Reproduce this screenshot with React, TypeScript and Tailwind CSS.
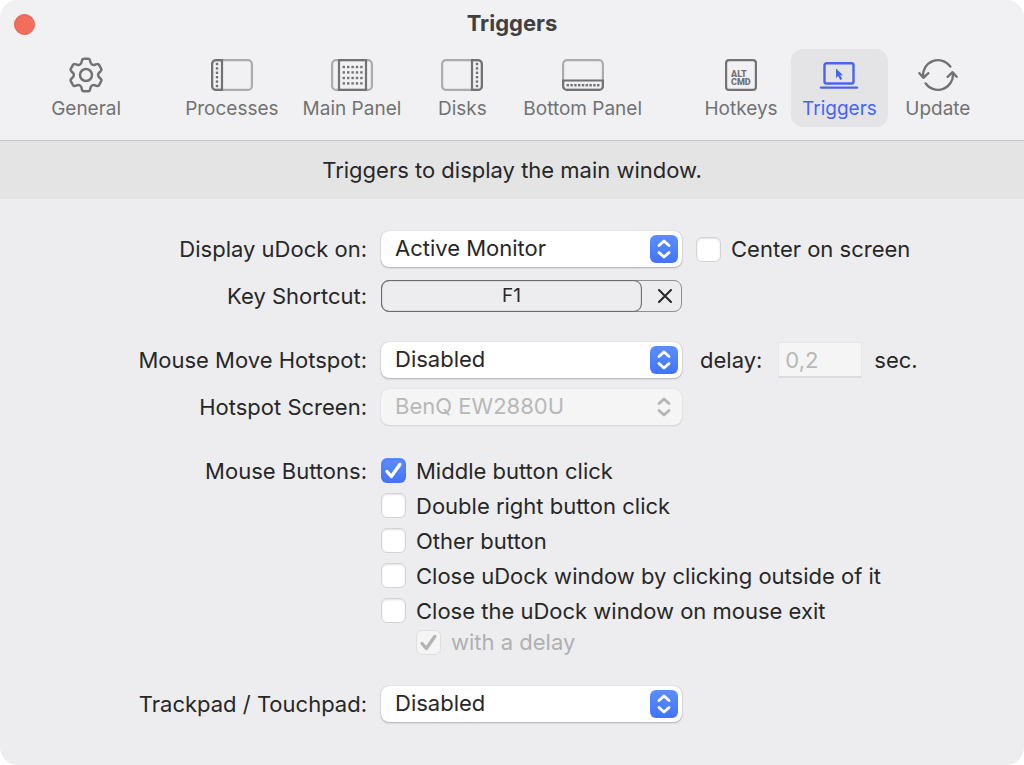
import { useState } from 'react';
import type { ReactNode } from 'react';

const ROW = 'flex h-9 items-center';

// Six-toothed gear outline around (18, 18)
function gearPath() {
    const at = (tooth: number, x: number, r: number) => {
        const a = (tooth * Math.PI) / 3;
        const px = 18 + x * Math.cos(a) + r * Math.sin(a);
        const py = 18 + x * Math.sin(a) - r * Math.cos(a);
        return `${px.toFixed(2)} ${py.toFixed(2)}`;
    };
    let d = `M${at(0, -4.5, 12.8)}`;
    for (let i = 0; i < 6; i++) {
        d += `L${at(i, -4, 14.8)}Q${at(i, -3.7, 16.3)} ${at(i, -2.2, 16.3)}L${at(i, 2.2, 16.3)}`;
        d += `Q${at(i, 3.7, 16.3)} ${at(i, 4, 14.8)}L${at(i, 4.5, 12.8)}`;
        d += `C${at(i, 5, 10.6)} ${at(i + 1, -5, 10.6)} ${at(i + 1, -4.5, 12.8)}`;
    }
    return d + 'Z';
}

function GearIcon() {
    return (
        <svg width="36" height="36" viewBox="0 0 36 36" fill="none" stroke="currentColor" strokeWidth="2.5" strokeLinejoin="round">
            <path d={gearPath()} />
            <circle cx="18" cy="18" r="6" />
        </svg>
    );
}

function ScreenIcon({ children }: { children: ReactNode }) {
    return (
        <svg width="42" height="32" viewBox="0 0 42 32" fill="none" stroke="currentColor" strokeWidth="2.2">
            <rect x="1.1" y="1.1" width="39.8" height="29.8" rx="4" stroke="#acacad" />
            {children}
        </svg>
    );
}

function Dots({ xs, ys }: { xs: number[]; ys: number[] }) {
    return (
        <>
            {ys.map((y) => xs.map((x) => <rect key={`${x}-${y}`} x={x - 1.2} y={y - 1.2} width="2.4" height="2.4" fill="currentColor" stroke="none" />))}
        </>
    );
}

function ProcessesIcon() {
    return (
        <ScreenIcon>
            <path d="M11 1.100H5a4 4 0 0 0-3.900 4v21.800a4 4 0 0 0 3.900 4h6z" />
            <Dots xs={[6]} ys={[5, 9.4, 13.8, 18.2, 22.6, 27]} />
        </ScreenIcon>
    );
}

function MainPanelIcon() {
    return (
        <ScreenIcon>
            <rect x="8" y="1.1" width="27" height="29.8" />
            <Dots xs={[12.8, 17.2, 21.6, 26, 30.4]} ys={[8, 13.4, 19, 24.4]} />
        </ScreenIcon>
    );
}

function DisksIcon() {
    return (
        <ScreenIcon>
            <path d="M31 1.100h6a4 4 0 0 1 3.900 4v21.800a4 4 0 0 1-3.900 4h-6z" />
            <Dots xs={[36]} ys={[5, 9.4, 13.8, 18.2, 22.6, 27]} />
        </ScreenIcon>
    );
}

function BottomPanelIcon() {
    return (
        <ScreenIcon>
            <path d="M1.100 21.500h39.800v5.400a4 4 0 0 1-4 4H5.100a4 4 0 0 1-4-4z" />
            <Dots xs={[5.8, 9.6, 13.4, 17.2, 21, 24.8, 28.6, 32.4, 36.2]} ys={[26.2]} />
        </ScreenIcon>
    );
}

function HotkeysIcon() {
    return (
        <svg width="32" height="32" viewBox="0 0 32 32" fill="none" stroke="currentColor" strokeWidth="2.2">
            <rect x="1.1" y="1.1" width="29.8" height="29.8" rx="3" />
            <g className="font-['Roboto',sans-serif] text-[9px] font-black" fill="currentColor" stroke="none">
                <text x="6" y="17.6">ALT</text>
                <text x="6" y="26.2">CMD</text>
            </g>
        </svg>
    );
}

function TriggersIcon() {
    return (
        <svg width="40" height="28" viewBox="0 0 40 28" fill="none" stroke="currentColor" strokeWidth="2.4">
            <rect x="5.5" y="2.2" width="29" height="20.3" rx="2" />
            <path d="M2 26.600h36" strokeLinecap="round" />
            <path d="M17 7.500v9.500l2.200-2 2 4 2-1-2-3.800h2.800z" fill="currentColor" stroke="none" />
        </svg>
    );
}

function UpdateIcon() {
    return (
        <svg width="42" height="34" viewBox="0 0 42 34" fill="none" stroke="currentColor" strokeWidth="2.4" strokeLinecap="round" strokeLinejoin="round">
            <path d="M33.4 8.6A15 15 0 0 0 6.200 19.200M2.400 15.200l4 4.600 5-4.600" />
            <path d="M8.600 25.400A15 15 0 0 0 35.800 14.800M30.600 18.800l5-4.600 4 4.600" />
        </svg>
    );
}

function ToolbarItem({ label, icon, active, onClick }: { label: string; icon: ReactNode; active: boolean; onClick: () => void }) {
    return (
        <button
            type="button"
            onClick={onClick}
            className={`flex h-[78px] min-w-24 flex-col items-center rounded-xl px-[11px] pt-2 ${active ? 'bg-[#e4e4e6] text-[#4764f5]' : 'text-[#727273]'}`}
        >
            <span className="flex h-9 items-center">{icon}</span>
            <span className="mt-1 text-[19px] leading-6 whitespace-nowrap">{label}</span>
        </button>
    );
}

function Chevrons() {
    return (
        <svg width="14" height="20" viewBox="0 0 14 20" fill="none" stroke="currentColor" strokeWidth="2.8" strokeLinecap="round" strokeLinejoin="round">
            <path d="M2 6.500 7 2l5 4.500M2 13.500l5 4.500 5-4.500" />
        </svg>
    );
}

function PopupSelect({ id, options, disabled = false }: { id: string; options: string[]; disabled?: boolean }) {
    return (
        <div className="relative w-[301px] shrink-0">
            <select
                id={id}
                disabled={disabled}
                className="block h-9 w-full appearance-none rounded-lg bg-white pr-10 pb-0.5 pl-3.5 text-[#272727] shadow-[0_0_1px_rgba(0,0,0,0.25),0_1px_2px_rgba(0,0,0,0.25)] disabled:bg-[#f5f5f5] disabled:text-[#b8b8b9] disabled:opacity-100 disabled:shadow-[0_0_1px_rgba(0,0,0,0.15),0_1px_2px_rgba(0,0,0,0.1)]"
            >
                {options.map((o) => (
                    <option key={o}>{o}</option>
                ))}
            </select>
            <span
                className={`pointer-events-none absolute top-1 right-1 flex size-7 items-center justify-center rounded-md ${disabled ? 'text-[#b4b4b5]' : 'bg-linear-to-b from-[#5a90fb] to-[#4372fb] text-white'}`}
            >
                <Chevrons />
            </span>
        </div>
    );
}

function Checkbox({ label, defaultChecked, disabled }: { label: string; defaultChecked?: boolean; disabled?: boolean }) {
    return (
        <label className={`flex items-center gap-2.5 whitespace-nowrap ${disabled ? 'text-[#b0b0b1]' : ''}`}>
            <span className="relative size-[25px] shrink-0">
                <input
                    type="checkbox"
                    defaultChecked={defaultChecked}
                    disabled={disabled}
                    className="peer block size-full appearance-none rounded-md border border-[#d3d3d4] bg-white shadow-[inset_0_1px_2px_rgba(0,0,0,0.12)] enabled:checked:border-transparent enabled:checked:bg-linear-to-b enabled:checked:from-[#5a90fb] enabled:checked:to-[#4372fb] enabled:checked:bg-origin-border disabled:border-[#dededf] disabled:bg-[#f5f5f5] disabled:shadow-none"
                />
                <svg
                    viewBox="0 0 25 25"
                    fill="none"
                    stroke="currentColor"
                    strokeWidth="3.4"
                    strokeLinecap="round"
                    strokeLinejoin="round"
                    className="pointer-events-none absolute inset-0 hidden text-white peer-checked:block peer-disabled:text-[#b4b4b5]"
                >
                    <path d="M6 13.500l4.300 5L18.800 6.500" />
                </svg>
            </span>
            <span>{label}</span>
        </label>
    );
}

function FieldRow({ label, htmlFor, children }: { label: string; htmlFor?: string; children: ReactNode }) {
    return (
        <div className="grid grid-cols-[259px_1fr] gap-x-3.5">
            <div className={`${ROW} justify-end whitespace-nowrap`}>
                {htmlFor ? <label htmlFor={htmlFor}>{label}</label> : <span>{label}</span>}
            </div>
            {children}
        </div>
    );
}

const toolbarGroups = [
    [{ label: 'General', icon: <GearIcon /> }],
    [
        { label: 'Processes', icon: <ProcessesIcon /> },
        { label: 'Main Panel', icon: <MainPanelIcon /> },
        { label: 'Disks', icon: <DisksIcon /> },
        { label: 'Bottom Panel', icon: <BottomPanelIcon /> },
    ],
    [
        { label: 'Hotkeys', icon: <HotkeysIcon /> },
        { label: 'Triggers', icon: <TriggersIcon /> },
        { label: 'Update', icon: <UpdateIcon /> },
    ],
];

const mouseOptions = ['Middle button click', 'Double right button click', 'Other button', 'Close uDock window by clicking outside of it', 'Close the uDock window on mouse exit'];

export default function App() {
    const [tab, setTab] = useState('Triggers');

    return (
        <div className="min-h-screen bg-white font-['Inter',sans-serif]">
            <div className="flex min-h-screen flex-col overflow-hidden rounded-[18px] bg-[#ededef] text-[22px] leading-7 text-[#272727]">
                <header className="border-b border-[#c6c6c8] bg-[#f1f1f3] pb-[13px]">
                    <div className="grid h-[49px] grid-cols-[1fr_auto_1fr] items-center px-3.5">
                        <button type="button" aria-label="Close" className="size-[21px] rounded-full border border-[#e2614f] bg-[#f16d5c]" />
                        <h1 className="pb-1 font-bold text-[#404041]">Triggers</h1>
                    </div>
                    <nav className="flex justify-center gap-10">
                        {toolbarGroups.map((group) => (
                            <div key={group[0].label} className="flex gap-0.5">
                                {group.map((item) => (
                                    <ToolbarItem key={item.label} {...item} active={tab === item.label} onClick={() => setTab(item.label)} />
                                ))}
                            </div>
                        ))}
                    </nav>
                </header>

                <p className="bg-[#e4e4e4] py-[15px] text-center">Triggers to display the main window.</p>

                <form className="mx-auto flex w-full max-w-[808px] flex-col gap-7 pt-8 pb-10">
                    <div className="flex flex-col gap-[11px]">
                        <FieldRow label="Display uDock on:" htmlFor="display">
                            <div className={`${ROW} gap-3.5`}>
                                <PopupSelect id="display" options={['Active Monitor']} />
                                <Checkbox label="Center on screen" />
                            </div>
                        </FieldRow>
                        <FieldRow label="Key Shortcut:">
                            <div className={ROW}>
                                <div className="flex h-8 w-[301px] rounded-lg border border-[#8f8f90]">
                                    <button type="button" className="-m-px grow rounded-lg border border-[#6c6c6d] text-[19px] leading-6 shadow-[inset_0_0_1px_#6c6c6d]">
                                        F1
                                    </button>
                                    <button type="button" aria-label="Clear shortcut" className="flex w-10 items-center justify-center pl-2">
                                        <svg width="14" height="14" viewBox="0 0 14 14" stroke="currentColor" strokeWidth="2" strokeLinecap="round">
                                            <path d="M1 1l12 12M13 1 1 13" />
                                        </svg>
                                    </button>
                                </div>
                            </div>
                        </FieldRow>
                    </div>

                    <div className="flex flex-col gap-[11px]">
                        <FieldRow label="Mouse Move Hotspot:" htmlFor="hotspot">
                            <div className={ROW}>
                                <PopupSelect id="hotspot" options={['Disabled']} />
                                <label htmlFor="delay" className="ml-[18px]">delay:</label>
                                <input
                                    id="delay"
                                    defaultValue="0,2"
                                    disabled
                                    className="ml-4 h-9 w-[84px] shrink-0 border border-b-2 border-[#e6e6e7] border-b-[#dcdcdd] bg-[#f5f5f5] px-1.5 text-[#b8b8b9]"
                                />
                                <span className="ml-3">sec.</span>
                            </div>
                        </FieldRow>
                        <FieldRow label="Hotspot Screen:" htmlFor="screen">
                            <div className={ROW}>
                                <PopupSelect id="screen" options={['BenQ EW2880U']} disabled />
                            </div>
                        </FieldRow>
                    </div>

                    <FieldRow label="Mouse Buttons:">
                        <div>
                            {mouseOptions.map((option, i) => (
                                <div key={option} className="flex h-[35px] items-center">
                                    <Checkbox label={option} defaultChecked={i === 0} />
                                </div>
                            ))}
                            <div className="flex h-[30px] items-start pl-[35px]">
                                <Checkbox label="with a delay" defaultChecked disabled />
                            </div>
                        </div>
                    </FieldRow>

                    <FieldRow label="Trackpad / Touchpad:" htmlFor="trackpad">
                        <div className={ROW}>
                            <PopupSelect id="trackpad" options={['Disabled']} />
                        </div>
                    </FieldRow>
                </form>
            </div>
        </div>
    );
}
